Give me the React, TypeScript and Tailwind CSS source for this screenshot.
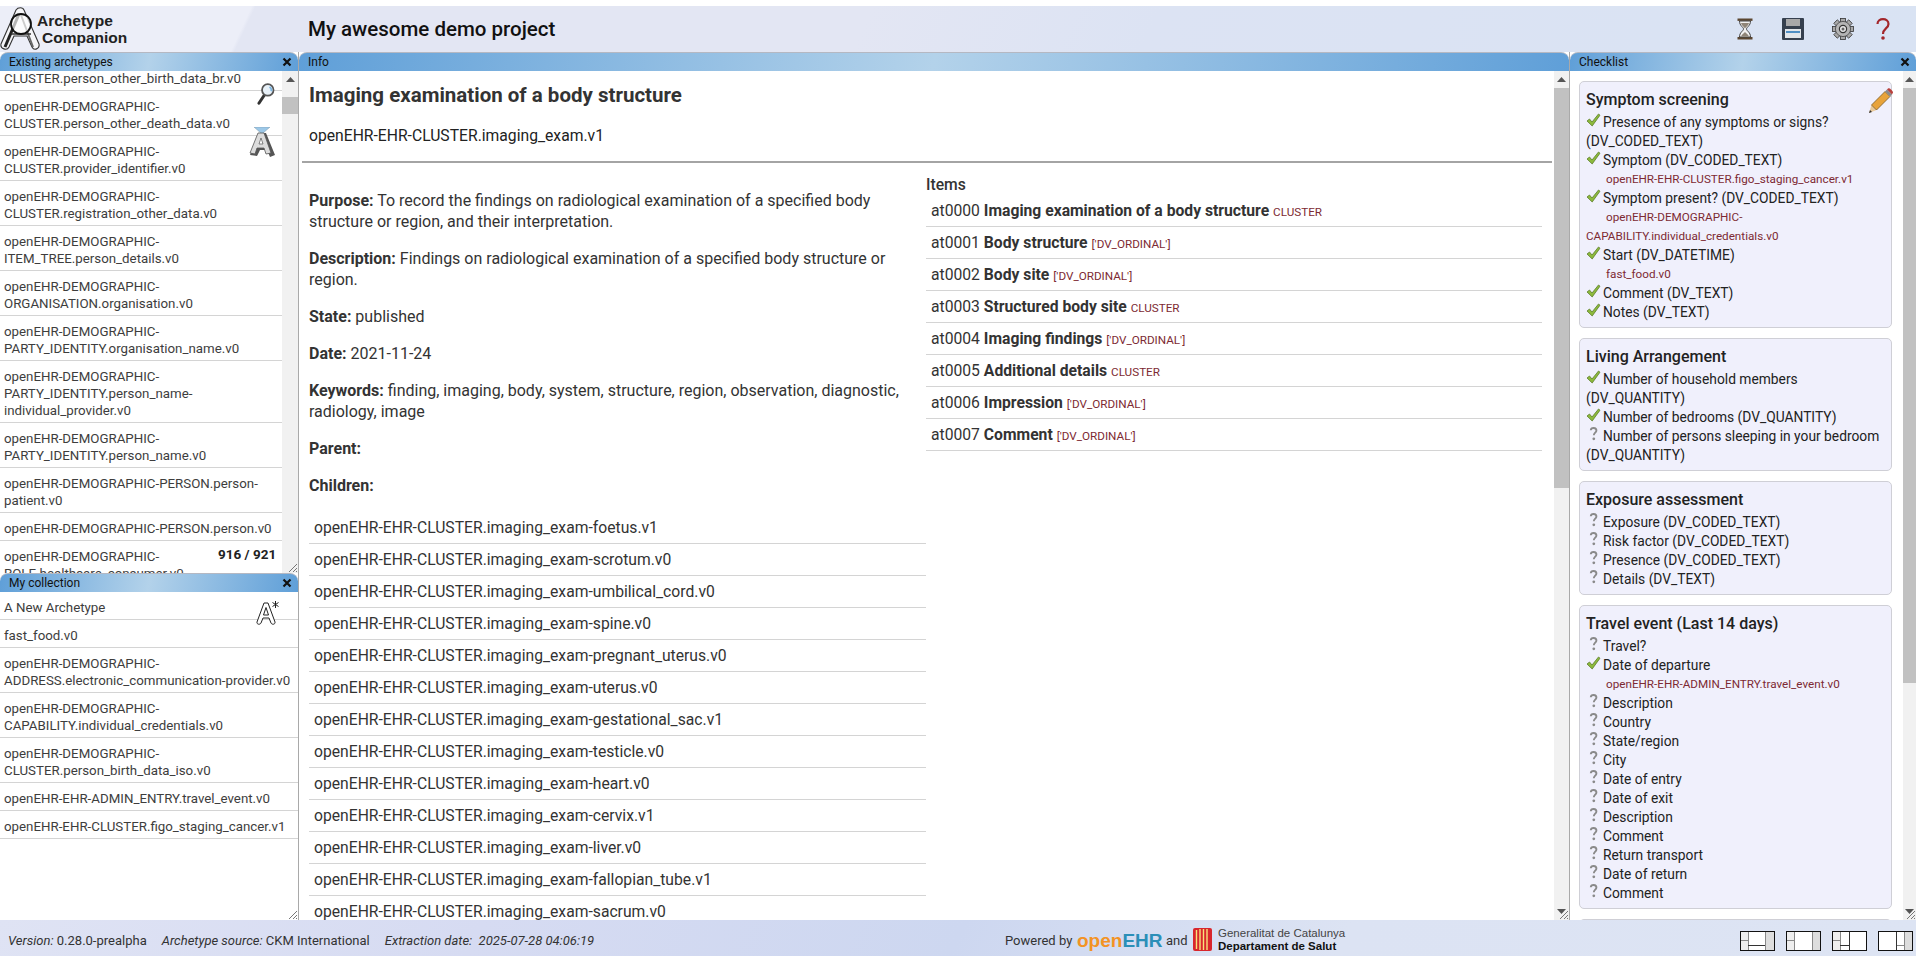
import { ReactNode } from "react";

const existing = [
  "CLUSTER.person_other_birth_data_br.v0",
  "openEHR-DEMOGRAPHIC-\nCLUSTER.person_other_death_data.v0",
  "openEHR-DEMOGRAPHIC-\nCLUSTER.provider_identifier.v0",
  "openEHR-DEMOGRAPHIC-\nCLUSTER.registration_other_data.v0",
  "openEHR-DEMOGRAPHIC-\nITEM_TREE.person_details.v0",
  "openEHR-DEMOGRAPHIC-\nORGANISATION.organisation.v0",
  "openEHR-DEMOGRAPHIC-\nPARTY_IDENTITY.organisation_name.v0",
  "openEHR-DEMOGRAPHIC-\nPARTY_IDENTITY.person_name-\nindividual_provider.v0",
  "openEHR-DEMOGRAPHIC-\nPARTY_IDENTITY.person_name.v0",
  "openEHR-DEMOGRAPHIC-PERSON.person-\npatient.v0",
  "openEHR-DEMOGRAPHIC-PERSON.person.v0",
  "openEHR-DEMOGRAPHIC-\nROLE.healthcare_consumer.v0",
];

const collection = [
  "A New Archetype",
  "fast_food.v0",
  "openEHR-DEMOGRAPHIC-\nADDRESS.electronic_communication-provider.v0",
  "openEHR-DEMOGRAPHIC-\nCAPABILITY.individual_credentials.v0",
  "openEHR-DEMOGRAPHIC-\nCLUSTER.person_birth_data_iso.v0",
  "openEHR-EHR-ADMIN_ENTRY.travel_event.v0",
  "openEHR-EHR-CLUSTER.figo_staging_cancer.v1",
];

const children = [
  "foetus.v1",
  "scrotum.v0",
  "umbilical_cord.v0",
  "spine.v0",
  "pregnant_uterus.v0",
  "uterus.v0",
  "gestational_sac.v1",
  "testicle.v0",
  "heart.v0",
  "cervix.v1",
  "liver.v0",
  "fallopian_tube.v1",
  "sacrum.v0",
];

const items = [
  ["at0000", "Imaging examination of a body structure", "CLUSTER"],
  ["at0001", "Body structure", "['DV_ORDINAL']"],
  ["at0002", "Body site", "['DV_ORDINAL']"],
  ["at0003", "Structured body site", "CLUSTER"],
  ["at0004", "Imaging findings", "['DV_ORDINAL']"],
  ["at0005", "Additional details", "CLUSTER"],
  ["at0006", "Impression", "['DV_ORDINAL']"],
  ["at0007", "Comment", "['DV_ORDINAL']"],
];

type Check = { done?: boolean; text: string; sub?: string };

const cards: { title: string; rows: Check[] }[] = [
  {
    title: "Symptom screening",
    rows: [
      { done: true, text: "Presence of any symptoms or signs?\n(DV_CODED_TEXT)" },
      { done: true, text: "Symptom (DV_CODED_TEXT)", sub: "openEHR-EHR-CLUSTER.figo_staging_cancer.v1" },
      { done: true, text: "Symptom present? (DV_CODED_TEXT)", sub: "openEHR-DEMOGRAPHIC-\nCAPABILITY.individual_credentials.v0" },
      { done: true, text: "Start (DV_DATETIME)", sub: "fast_food.v0" },
      { done: true, text: "Comment (DV_TEXT)" },
      { done: true, text: "Notes (DV_TEXT)" },
    ],
  },
  {
    title: "Living Arrangement",
    rows: [
      { done: true, text: "Number of household members\n(DV_QUANTITY)" },
      { done: true, text: "Number of bedrooms (DV_QUANTITY)" },
      { text: "Number of persons sleeping in your bedroom\n(DV_QUANTITY)" },
    ],
  },
  {
    title: "Exposure assessment",
    rows: [
      { text: "Exposure (DV_CODED_TEXT)" },
      { text: "Risk factor (DV_CODED_TEXT)" },
      { text: "Presence (DV_CODED_TEXT)" },
      { text: "Details (DV_TEXT)" },
    ],
  },
  {
    title: "Travel event (Last 14 days)",
    rows: [
      { text: "Travel?" },
      { done: true, text: "Date of departure", sub: "openEHR-EHR-ADMIN_ENTRY.travel_event.v0" },
      { text: "Description" },
      { text: "Country" },
      { text: "State/region" },
      { text: "City" },
      { text: "Date of entry" },
      { text: "Date of exit" },
      { text: "Description" },
      { text: "Comment" },
      { text: "Return transport" },
      { text: "Date of return" },
      { text: "Comment" },
    ],
  },
];

function CheckIcon() {
  return (
    <svg viewBox="0 0 15 14" className="inline-block w-[15px] h-[14px] mr-[2px] align-middle -my-[3px] relative -top-[3px]">
      <path d="M1 8l2.500-2 2.500 3L12.500 1 14 2.200 6.200 13z" fill="#8dba3c" stroke="#5d7d2c" strokeWidth="0.8" />
    </svg>
  );
}

function QuestionIcon({ color = "#8a8a8a" }: { color?: string }) {
  return (
    <svg viewBox="0 0 15 14" className="inline-block w-[15px] h-[14px] mr-[2px] align-middle -my-[3px] relative -top-[3px]">
      <path d="M4.800 3.200c.2-3 5.600-3 5.600.2 0 2-2.600 2.400-2.600 4.800" fill="none" stroke={color} strokeWidth="1.900" />
      <circle cx="7.800" cy="11.800" r="1.400" fill={color} />
    </svg>
  );
}

function Grip() {
  return (
    <svg viewBox="0 0 10 10" className="absolute right-0 bottom-0 w-[10px] h-[10px]">
      <path d="M1 9l8-8M5 9l4-4M8 9l1-1" stroke="#777" strokeWidth="1" />
    </svg>
  );
}

function PanelTitle({ title, close = true }: { title: string; close?: boolean }) {
  return (
    <div className="h-[19px] shrink-0 flex items-center justify-between pl-[9px] pr-[6px] rounded-t-lg border-t border-[#b5b8c2] text-[12px] text-[#111] bg-[linear-gradient(100deg,#5f9fd8_0%,#b3d2ea_50%,#5f9fd8_100%)]">
      <span>{title}</span>
      {close && (
        <svg viewBox="0 0 10 10" className="w-[10px] h-[10px]">
          <path d="M1.500 1.500l7 7M8.500 1.500l-7 7" stroke="#111" strokeWidth="2.200" />
        </svg>
      )}
    </div>
  );
}

function ScrollBar({ width, thumbTop, thumbHeight, down }: { width: string; thumbTop: string; thumbHeight: string; down?: boolean }) {
  return (
    <div className={`${width} shrink-0 bg-[#f1f1f1] flex flex-col items-center`}>
      <svg viewBox="0 0 9 5" className="w-[9px] h-[5px] mt-[6px] shrink-0">
        <path d="M0 5l4.500-5L9 5z" fill="#555" />
      </svg>
      <div className={`w-full bg-[#c1c1c1] ${thumbTop} ${thumbHeight}`} />
      {down && (
        <svg viewBox="0 0 9 5" className="w-[9px] h-[5px] mt-auto mb-[6px] shrink-0">
          <path d="M0 0l4.500 5L9 0z" fill="#555" />
        </svg>
      )}
    </div>
  );
}

function ListRow({ text }: { text: string }) {
  return (
    <div className="pl-[4px] pt-[7px] pb-[3px] border-b border-[#d4d4d4] text-[13.300px] leading-[17px] text-[#3d3d3d] whitespace-pre">
      {text}
    </div>
  );
}

function Logo() {
  return (
    <svg viewBox="0 0 40 44" className="w-[40px] h-[44px] shrink-0">
      <path d="M16 3c2-3 7-3 8 0l15 34c1 5-5 7-7 3L27 29H14L9 40c-2 4-9 2-8-3z" fill="#f5f5f8" stroke="#333" strokeWidth="1.100" />
      <path d="M19 7L5 40" stroke="#222" strokeWidth="3" />
      <path d="M21 8L33 40" stroke="#666" strokeWidth="2" fill="none" />
      <path d="M11 27h20" stroke="#333" strokeWidth="1.500" />
      <circle cx="21" cy="17" r="10" fill="#ffffffaa" stroke="#111" strokeWidth="1.800" />
    </svg>
  );
}

function Hourglass() {
  return (
    <svg viewBox="0 0 16 22" className="w-[16px] h-[22px]">
      <rect x="0.5" y="0.5" width="15" height="2.400" fill="#5b4630" />
      <rect x="0.5" y="19" width="15" height="2.500" fill="#5b4630" />
      <path d="M2.500 3h11c0 5-4 6-4 8s4 3 4 8h-11c0-5 4-6 4-8s-4-3-4-8z" fill="#f1f1f1" stroke="#444" />
      <path d="M4 5h8c-.5 2.500-3 3.500-4 5.500-1-2-3.500-3-4-5.500zM4 18.500c.5-2 3-3 4-4.500 1 1.500 3.500 2.500 4 4.500z" fill="#8f8578" />
    </svg>
  );
}

function Floppy() {
  return (
    <svg viewBox="0 0 22 22" className="w-[22px] h-[22px]">
      <path d="M0 1a1 1 0 011-1h20a1 1 0 011 1v20a1 1 0 01-1 1H1a1 1 0 01-1-1z" fill="#36404e" />
      <rect x="4" y="1" width="14" height="7" fill="#a8a8a8" />
      <rect x="3" y="11" width="16" height="9" fill="#e2e6ea" />
      <rect x="4" y="13" width="14" height="2" fill="#4f8fc4" />
    </svg>
  );
}

function Gear() {
  const teeth = [0, 45, 90, 135, 180, 225, 270, 315];
  return (
    <svg viewBox="0 0 22 22" className="w-[22px] h-[22px]">
      {teeth.map((deg) => (
        <rect key={deg} x="8.500" y="0.500" width="5" height="5" fill="#a9a9a9" stroke="#333" strokeWidth="0.8" transform={`rotate(${deg} 11 11)`} />
      ))}
      <circle cx="11" cy="11" r="7.600" fill="#b5b5b5" stroke="#444" strokeWidth="0.8" />
      <circle cx="11" cy="11" r="3.600" fill="#e8e8e8" stroke="#333" strokeWidth="1.200" />
      <circle cx="11" cy="11" r="1.500" fill="#666" />
    </svg>
  );
}

function RedQuestion() {
  return (
    <svg viewBox="0 0 14 22" className="w-[14px] h-[22px]">
      <path d="M1.500 6c0-6.500 11-6.500 11 0 0 4.500-5.500 4.500-5.500 10" fill="none" stroke="#a3262a" strokeWidth="2.200" />
      <circle cx="7" cy="20" r="1.800" fill="#a3262a" />
    </svg>
  );
}

function Magnifier() {
  return (
    <svg viewBox="0 0 20 26" className="w-[18px] h-[23px]">
      <path d="M8 15L2 24" stroke="#333" strokeWidth="3.400" strokeLinecap="round" />
      <circle cx="12" cy="9" r="6.500" fill="#e8f1f8" stroke="#555" strokeWidth="2" />
      <path d="M14 5.500a5 5 0 012 5" stroke="#7db6e2" strokeWidth="2" fill="none" />
    </svg>
  );
}

function ArchetypeIcon() {
  return (
    <svg viewBox="0 0 26 30" className="w-[26px] h-[30px]">
      <path d="M5 0h16l-8 7z" fill="#9cc8e8" stroke="#7d96a8" strokeWidth="0.5" />
      <path d="M10 6h7l9 22-5 2-3-7h-7l-3 6-7-1z" fill="#555" />
      <path d="M9 6h6l7 20-5 1-2-6H8l-2 6-5-1z" fill="#dcdcdc" stroke="#555" strokeWidth="0.8" />
      <path d="M12 11l2 6h-4z" fill="#fff" stroke="#555" strokeWidth="0.7" />
    </svg>
  );
}

function NewArchetypeIcon() {
  return (
    <svg viewBox="0 0 26 26" className="w-[26px] h-[26px]">
      <path d="M10 3h4l7 19c.500 2.500-3 3-4 1l-2-5H9l-2 5c-1 2-4.500 1.500-4-1z" fill="#fff" stroke="#222" strokeWidth="1" />
      <path d="M12 7.500L14.500 15h-5z" fill="#fff" stroke="#222" strokeWidth="1" />
      <path d="M21.500 1v7M18.500 2.500l6 4M24.500 2.500l-6 4" stroke="#222" strokeWidth="1" />
    </svg>
  );
}

function Pencil() {
  return (
    <svg viewBox="0 0 25 25" className="w-[25px] h-[25px]">
      <path d="M0 25l2.500-8L7.500 22z" fill="#e9c99a" />
      <path d="M0 25l1-3 2 2z" fill="#333" />
      <path d="M2.500 17L16 3.500l5 5L7.500 22z" fill="#e8a33a" stroke="#7b5a25" strokeWidth="0.8" />
      <path d="M16 3.500l2-2 5 5-2 2z" fill="#8a8a8a" />
      <path d="M18 1.500l1-1c1-.500 2 0 3 1s2 2 2 3l-1 2z" fill="#b8413c" />
    </svg>
  );
}

function LayoutIcon({ children }: { children: ReactNode }) {
  return (
    <svg viewBox="0 0 35 20" className="w-[35px] h-[20px]">
      <rect x="0.5" y="0.5" width="34" height="19" fill="#fff" stroke="#111" />
      {children}
      <rect x="0.5" y="0.5" width="34" height="19" fill="none" stroke="#111" />
    </svg>
  );
}

function ChecklistCard({ title, rows }: { title: string; rows: Check[] }) {
  return (
    <div className="mb-[10px] pl-[6px] pr-[2px] pt-[7px] pb-[5px] bg-[#f0f0fc] border border-[#cfcfd6] rounded-[5px]">
      <h3 className="text-[16px] leading-[21px] font-medium text-[#222] mb-[3px]">{title}</h3>
      {rows.map((row, i) => (
        <div key={i} className="text-[13.800px] leading-[19px] text-[#222]">
          <div className="whitespace-pre-line">
            {row.done ? <CheckIcon /> : <QuestionIcon />}
            {row.text}
          </div>
          {row.sub && (
            <div className="text-[11.700px] leading-[19px] text-[#7d2a33] whitespace-pre-line">
              <span className="inline-block w-[20px]" />
              {row.sub}
            </div>
          )}
        </div>
      ))}
    </div>
  );
}

export default function App() {
  return (
    <div className="h-screen overflow-hidden flex flex-col bg-white pt-[6px] font-['Roboto','Noto_Sans',sans-serif] text-[#333]">
      <header className="h-[46px] shrink-0 flex items-center bg-[linear-gradient(115deg,#eceef8_0%,#eceef8_13%,#e3e6f3_13.200%,#e3e6f3_45%,#dce3f3_60%,#d9e3f3_100%)]">
        <div className="w-[308px] shrink-0 flex items-center">
          <Logo />
          <div className="font-['Liberation_Sans',sans-serif] font-bold text-[15.500px] leading-[17px] text-[#222] -ml-[3px]">
            <div>Archetype</div>
            <div className="pl-[5px]">Companion</div>
          </div>
        </div>
        <h1 className="flex-1 text-[20.500px] font-medium text-[#111]">My awesome demo project</h1>
        <div className="flex items-center pr-[26px]">
          <Hourglass />
          <div className="ml-[29px]"><Floppy /></div>
          <div className="ml-[28px]"><Gear /></div>
          <div className="ml-[22px]"><RedQuestion /></div>
        </div>
      </header>

      <main className="flex-1 min-h-0 flex">
        {/* left column */}
        <aside className="w-[298px] shrink-0 flex flex-col">
          <section className="h-[521px] shrink-0 flex flex-col">
            <PanelTitle title="Existing archetypes" />
            <div className="relative flex-1 min-h-0 flex">
              <div className="flex-1 overflow-hidden">
                <div className="-mt-[27px]">
                  <div className="h-[19px]" />
                  {existing.map((t) => (
                    <ListRow key={t} text={t} />
                  ))}
                </div>
              </div>
              <ScrollBar width="w-[16px]" thumbTop="mt-[15px]" thumbHeight="h-[17px]" />
              <div className="absolute left-[257px] top-[11px]"><Magnifier /></div>
              <div className="absolute left-[249px] top-[56px]"><ArchetypeIcon /></div>
              <div className="absolute left-[218px] top-[473px] text-[13.500px] font-bold text-[#222]">916 / 921</div>
              <Grip />
            </div>
          </section>
          <section className="flex-1 min-h-0 flex flex-col">
            <PanelTitle title="My collection" />
            <div className="relative flex-1 min-h-0">
              {collection.map((t) => (
                <ListRow key={t} text={t} />
              ))}
              <div className="absolute left-[254px] top-[8px]"><NewArchetypeIcon /></div>
              <Grip />
            </div>
          </section>
        </aside>

        {/* info panel */}
        <section className="w-[1272px] shrink-0 flex flex-col border-x border-[#a9a9a9]">
          <PanelTitle title="Info" close={false} />
          <div className="relative flex-1 min-h-0 flex">
            <div className="flex-1 min-w-0 overflow-hidden">
              <h2 className="pl-[10px] pt-[11px] text-[20.500px] leading-[27px] font-bold text-[#333]">
                Imaging examination of a body structure
              </h2>
              <p className="pl-[10px] mt-[16px] text-[15.700px] leading-[21px] text-[#222]">openEHR-EHR-CLUSTER.imaging_exam.v1</p>
              <hr className="ml-[3px] mr-[2px] mt-[15px] border-t-2 border-[#a4a4a4]" />
              <div className="flex pl-[10px] mt-[18px]">
                <div className="w-[617px] shrink-0 text-[15.700px] leading-[21px] text-[#333]">
                  <div className="pr-[10px] mt-[9px] text-[16px]">
                    <p className="mb-[16px]"><b>Purpose:</b> To record the findings on radiological examination of a specified body structure or region, and their interpretation.</p>
                    <p className="mb-[16px]"><b>Description:</b> Findings on radiological examination of a specified body structure or region.</p>
                    <p className="mb-[16px]"><b>State:</b> published</p>
                    <p className="mb-[16px]"><b>Date:</b> 2021-11-24</p>
                    <p className="mb-[16px]"><b>Keywords:</b> finding, imaging, body, system, structure, region, observation, diagnostic, radiology, image</p>
                    <p className="mb-[16px]"><b>Parent:</b></p>
                    <p className="mb-[16px]"><b>Children:</b></p>
                  </div>
                  {children.map((c) => (
                    <div key={c} className="h-[32px] pl-[5px] flex items-center border-b border-[#d4d4d4]">
                      openEHR-EHR-CLUSTER.imaging_exam-{c}
                    </div>
                  ))}
                </div>
                <div className="w-[616px] shrink-0 text-[15.700px] -mt-[7px]">
                  <div className="font-medium leading-[21px] text-[#333]">Items</div>
                  {items.map(([id, name, type]) => (
                    <div key={id} className="h-[32px] pl-[5px] pt-[5px] border-b border-[#d4d4d4] leading-[21px] whitespace-pre text-[#333]">
                      {id} <b>{name}</b> <span className="text-[11.700px] text-[#7d2a33]">{type}</span>
                    </div>
                  ))}
                </div>
              </div>
            </div>
            <ScrollBar width="w-[15px]" thumbTop="mt-[6px]" thumbHeight="h-[400px]" down />
            <Grip />
          </div>
        </section>

        {/* checklist */}
        <section className="flex-1 min-w-0 flex flex-col">
          <PanelTitle title="Checklist" />
          <div className="relative flex-1 min-h-0 flex">
            <div className="flex-1 min-w-0 overflow-hidden pl-[9px] pr-[11px] pt-[10px]">
              {cards.map((c) => (
                <ChecklistCard key={c.title} title={c.title} rows={c.rows} />
              ))}
              <div className="h-[30px] bg-[#f0f0fc] border border-[#cfcfd6] rounded-[5px]" />
            </div>
            <ScrollBar width="w-[13px]" thumbTop="mt-[6px]" thumbHeight="h-[595px]" down />
            <div className="absolute left-[299px] top-[17px]"><Pencil /></div>
            <Grip />
          </div>
        </section>
      </main>

      <footer className="h-[36px] shrink-0 flex items-center pt-[6px] text-[13px] text-[#333] bg-[linear-gradient(115deg,#dfe3f4_0%,#d6dbf2_25%,#cdd7f0_50%,#dce3f3_70%,#dde4f3_100%)]">
        <div className="w-[1005px] shrink-0 pl-[8px] whitespace-pre">
          <i>Version:</i> 0.28.0-prealpha
          <span className="ml-[15px]"><i>Archetype source:</i> CKM International</span>
          <i className="ml-[15px]">Extraction date:  2025-07-28 04:06:19</i>
        </div>
        <span className="w-[72px] shrink-0">Powered by</span>
        <span className="w-[89px] shrink-0 font-['Liberation_Sans',sans-serif] font-bold text-[19px] leading-[20px]">
          <span className="text-[#f39324]">open</span>
          <span className="text-[#2b8fb8]">EHR</span>
        </span>
        <span className="w-[27px] shrink-0">and</span>
        <svg viewBox="0 0 19 23" className="w-[19px] h-[23px] shrink-0 -mt-[3px]">
          <rect width="19" height="23" rx="2" fill="#d8262c" />
          <path d="M3.500 2v19M7 1v21M10.500 1v21M14 1v21" stroke="#f7e27a" strokeWidth="1.400" />
        </svg>
        <div className="ml-[6px] -mt-[3px] font-['Liberation_Sans',sans-serif] text-[11.500px] leading-[13px]">
          <div className="text-[#444]">Generalitat de Catalunya</div>
          <div className="font-bold text-[#111]">Departament de Salut</div>
        </div>
        <div className="ml-auto flex items-center gap-[11px] pr-[3px]">
          <LayoutIcon>
            <rect x="1" y="1" width="7" height="18" fill="#eeeeee" />
            <rect x="26" y="1" width="8" height="18" fill="#dddddd" />
            <path d="M0 9.500h8M8.500 0v20M25.500 0v20" stroke="#888" />
            <path d="M8 14.500h17" stroke="#333" />
          </LayoutIcon>
          <LayoutIcon>
            <rect x="1" y="1" width="7" height="18" fill="#eeeeee" />
            <rect x="27" y="1" width="7" height="18" fill="#dddddd" />
            <path d="M0 9.500h8M8.500 0v20M26.500 0v20" stroke="#888" />
          </LayoutIcon>
          <LayoutIcon>
            <rect x="1" y="1" width="7" height="18" fill="#eeeeee" />
            <path d="M0 9.500h8M8.500 0v20" stroke="#888" />
            <path d="M8 14.500h9M17.500 0v20" stroke="#333" />
          </LayoutIcon>
          <LayoutIcon>
            <rect x="27" y="1" width="7" height="18" fill="#dddddd" />
            <path d="M18 14.500h9M26.500 0v20" stroke="#888" />
            <path d="M18.500 0v20" stroke="#333" />
          </LayoutIcon>
        </div>
      </footer>
    </div>
  );
}
